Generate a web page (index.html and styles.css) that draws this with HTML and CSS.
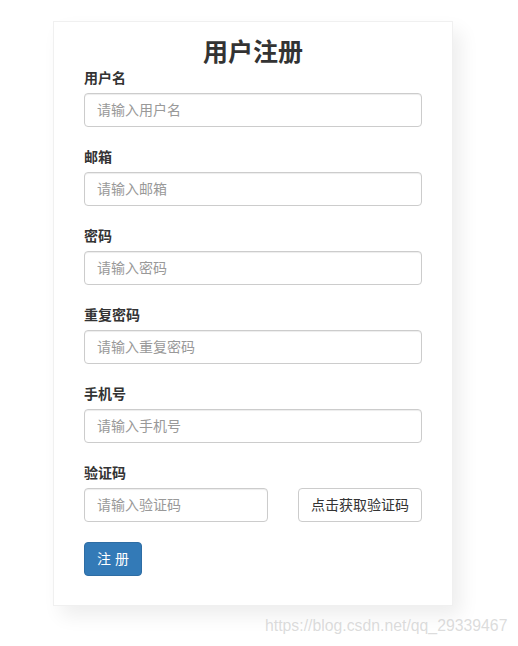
FILE: index.html
```html
<!DOCTYPE html>
<html lang="zh-CN">
<head>
<meta charset="utf-8">
<title>用户注册</title>
<link rel="stylesheet" href="styles.css">
</head>
<body>
<div class="card">
  <h2 class="title">用户注册</h2>
  <div class="group">
    <label class="label">用户名</label>
    <input class="input" type="text" placeholder="请输入用户名">
  </div>
  <div class="group">
    <label class="label">邮箱</label>
    <input class="input" type="text" placeholder="请输入邮箱">
  </div>
  <div class="group">
    <label class="label">密码</label>
    <input class="input" type="password" placeholder="请输入密码">
  </div>
  <div class="group">
    <label class="label">重复密码</label>
    <input class="input" type="password" placeholder="请输入重复密码">
  </div>
  <div class="group">
    <label class="label">手机号</label>
    <input class="input" type="text" placeholder="请输入手机号">
  </div>
  <div class="group">
    <label class="label">验证码</label>
    <div class="code-row">
      <input class="input code-input" type="text" placeholder="请输入验证码">
      <button class="btn btn-default" type="button">点击获取验证码</button>
    </div>
  </div>
  <button class="btn btn-primary" type="submit">注 册</button>
</div>
<div class="watermark">https://blog.csdn.net/qq_29339467</div>
</body>
</html>
```
FILE: styles.css
```css
* { box-sizing: border-box; }
html, body { margin: 0; padding: 0; background: #fff; }
body {
  font-family: "Liberation Sans", "Noto Sans CJK SC", sans-serif;
  font-size: 14px;
  color: #333;
  position: relative;
  height: 646px;
  overflow: hidden;
}
.card {
  margin: 21px 0 0 53px;
  width: 400px;
  border: 1px solid #f0f0f0;
  background: #fff;
  padding: 14px 30px 29px;
  box-shadow: 8px 10px 18px rgba(0,0,0,0.07);
}
.title {
  margin: 0;
  font-size: 25px;
  line-height: 32px;
  font-weight: 700;
  text-align: center;
  color: #333;
}
.group {
  margin-bottom: 20px;
}
.label {
  display: block;
  font-weight: 700;
  line-height: 20px;
  margin-bottom: 5px;
}
.input {
  display: block;
  width: 100%;
  height: 34px;
  padding: 6px 12px;
  font-family: inherit;
  font-size: 14px;
  color: #555;
  border: 1px solid #ccc;
  border-radius: 4px;
  background: #fff;
  box-shadow: inset 0 1px 1px rgba(0,0,0,0.075);
  outline: none;
}
.input::placeholder { color: #999; }
.code-row {
  display: flex;
  justify-content: space-between;
}
.code-input { width: 184px; }
.btn {
  display: inline-block;
  height: 34px;
  padding: 6px 12px;
  font-family: inherit;
  font-size: 14px;
  line-height: 20px;
  border: 1px solid transparent;
  border-radius: 4px;
  cursor: pointer;
  white-space: pre;
}
.btn-default {
  color: #333;
  background: #fff;
  border-color: #ccc;
  width: 124px;
}
.btn-primary {
  color: #fff;
  background: #337ab7;
  border-color: #2e6da4;
  width: 58px;
}
.watermark {
  position: absolute;
  left: 265px;
  top: 617px;
  font-family: "Liberation Sans", sans-serif;
  font-size: 15.8px;
  color: rgba(190,190,190,0.55);
  white-space: nowrap;
}
```
